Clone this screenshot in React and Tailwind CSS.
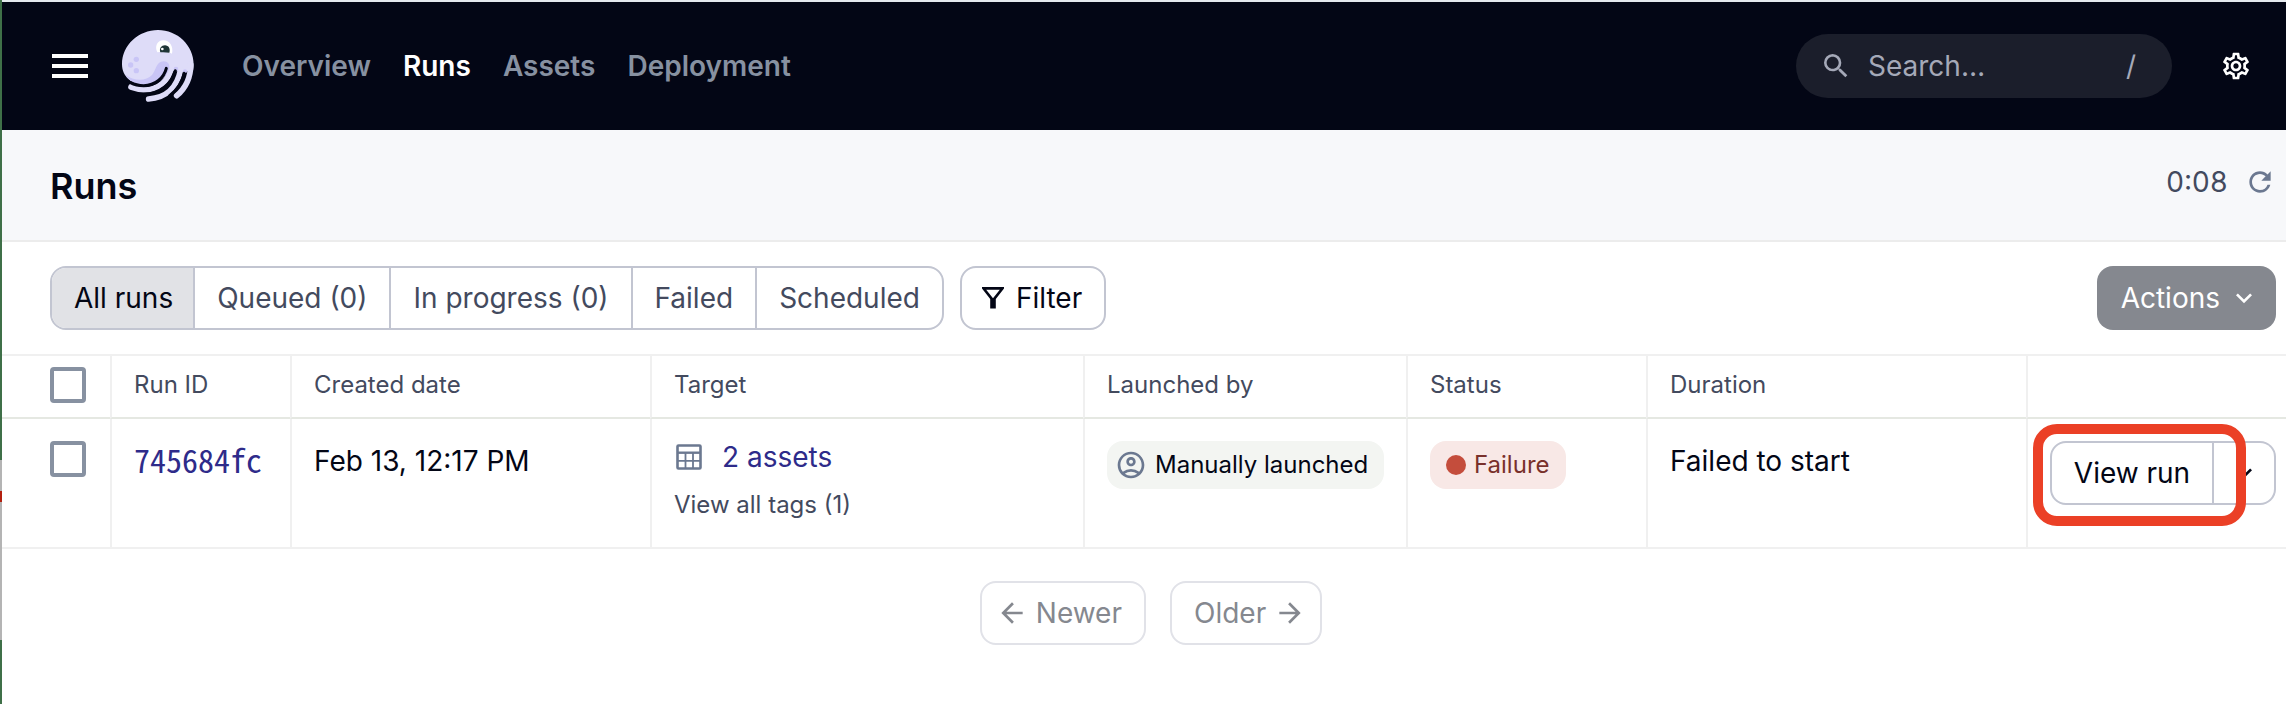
import { MdMenu, MdSearch, MdOutlineSettings, MdRefresh, MdOutlineAccountCircle, MdArrowBack, MdArrowForward, MdExpandMore } from "react-icons/md";

function Logo() {
  return (
    <svg viewBox="0 0 216 216" className="size-[72px]" fill="none" strokeLinecap="round" aria-hidden="true">
      <path
        d="M0 103C0 45 50 0 108 0s107 46 107 104c0 8-1 14-3 20l-77 0c-12 24-36 40-70 40C30 164 0 140 0 103Z"
        fill="#dedcf8"
      />
      <g stroke="#dedcf8" strokeWidth="17">
        <path d="M27 171c14 5 27 8 41 8 44 0 72-27 80-67" />
        <path d="M80 207c52-3 86-35 96-89" />
        <path d="M164 197c27-23 42-54 42-93" />
      </g>
      <path d="M10 134c26 20 62 20 80 1 12-13 12-41 35-41 13 0 18 10 17 20-6 30-40 51-77 51-24 0-44-12-55-31Z" fill="#c9c5f6" />
      <circle cx="162" cy="117" r="7" fill="#c9c5f6" />
      <circle cx="189" cy="124" r="6" fill="#c9c5f6" />
      <g stroke="#030615" strokeWidth="9">
        <path d="M133 115c-7 28-33 52-68 52-15 0-28-3-39-9" />
        <path d="M160 122c-11 40-46 69-94 71" />
        <path d="M187 130c-7 27-22 50-44 67" />
      </g>
      <circle cx="43" cy="88" r="8" fill="#c9c5f6" />
      <circle cx="26" cy="105" r="8" fill="#c9c5f6" />
      <circle cx="43" cy="122" r="8" fill="#c9c5f6" />
      <path d="M106 67c-9-17 0-36 18-36 19 0 31 18 26 40-12-6-31-7-44-4Z" fill="#fff" />
      <path d="M115 67c-4-11 3-21 14-21s17 11 13 22c-8-1-18-2-27-1Z" fill="#1f3536" />
      <circle cx="121" cy="57" r="4" fill="#fff" />
    </svg>
  );
}

function FilterIcon() {
  return (
    <svg viewBox="0 0 22 22" className="size-[22px]" aria-hidden="true">
      <path d="M0 0h22v1.500l-8.200 10.500v9.500h-5.600v-9.500L0 1.500ZM4.200 2.700l6.800 8.500 6.800-8.500Z" fill="currentColor" fillRule="evenodd" />
    </svg>
  );
}

function TableIcon() {
  return (
    <svg viewBox="0 0 26 26" className="size-[26px]" fill="none" stroke="currentColor" aria-hidden="true">
      <rect x="1.500" y="1.500" width="23" height="23" rx="1" strokeWidth="2.600" />
      <path d="M1 8.700h24" strokeWidth="2.400" />
      <path d="M1 16.800h24M9.500 9v16M17 9v16" strokeWidth="1.800" />
    </svg>
  );
}

const navItems = ["Overview", "Runs", "Assets", "Deployment"];
const tabs = ["All runs", "Queued (0)", "In progress (0)", "Failed", "Scheduled"];
const columns = ["Run ID", "Created date", "Target", "Launched by", "Status", "Duration"];

const checkbox = "block size-9 appearance-none rounded-[4px] border-4 border-[#8791a1] bg-white";
const outline = "flex h-16 items-center rounded-2xl border-2";
const th = "border-l-2 border-[#f0f0f0] px-[22px] pb-1 text-left text-2xl font-normal";
const td = "border-l-2 border-[#f0f0f0] px-[22px] pt-[22px] align-top";

export default function App() {
  return (
    <div className="flex min-h-screen bg-white font-[Inter,sans-serif] text-[28px] leading-10 text-[#030615]">
      <div className="flex w-[2px] shrink-0 flex-col bg-[#3f7048]">
        <div className="h-[460px]" />
        <div className="h-[180px] bg-[#b4b4b4] pt-[31px]">
          <div className="h-[11px] bg-[#b3200f]" />
        </div>
      </div>
      <div className="min-w-0 flex-1">
        <header className="flex h-[130px] items-center border-t-2 border-[#e4e9ee] bg-[#030615] pl-11 pr-[34px]">
          <button type="button" aria-label="Menu" className="text-white">
            <MdMenu className="size-12" />
          </button>
          <a href="#home" aria-label="Home" className="ml-7">
            <Logo />
          </a>
          <nav className="ml-12 flex gap-8 font-semibold">
            {navItems.map((item) => (
              <a key={item} href={"#" + item} className={item === "Runs" ? "text-white" : "text-[#8791a1]"}>
                {item}
              </a>
            ))}
          </nav>
          <label className="ml-auto flex h-16 w-[376px] items-center rounded-full bg-[#1b1e2b] pl-6 pr-9 text-[#a5a9b8]">
            <MdSearch className="size-8 shrink-0" />
            <input type="text" aria-label="Search" placeholder="Search…" className="ml-4 min-w-0 flex-1 bg-transparent placeholder:text-[#a5a9b8]" />
            <span>/</span>
          </label>
          <button type="button" aria-label="Settings" className="ml-12 text-white">
            <MdOutlineSettings className="size-8" />
          </button>
        </header>

        <div className="flex h-28 items-center justify-between border-b-2 border-[#ececec] bg-[#f7f8fa] pl-12 pr-[10px] pt-[2px]">
          <h1 className="text-4xl font-semibold">Runs</h1>
          <div className="flex items-center gap-4 pb-2 text-[#434a5e]">
            <span className="tabular-nums">0:08</span>
            <button type="button" aria-label="Refresh" className="text-[#6b7890]">
              <MdRefresh className="size-8" />
            </button>
          </div>
        </div>

        <div className="flex items-center gap-4 py-6 pl-12 pr-[10px]">
          <div className={outline + " overflow-hidden border-[#c2c5d1]"}>
            {tabs.map((tab, i) => (
              <button
                key={tab}
                type="button"
                className={
                  i === 0
                    ? "h-full bg-[#e1e2e6] pl-[22px] pr-5"
                    : "h-full border-l-2 border-[#c2c5d1] px-[22px] text-[#434a5e]"
                }
              >
                {tab}
              </button>
            ))}
          </div>
          <button type="button" className={outline + " gap-3 border-[#c2c5d1] pl-5 pr-[22px]"}>
            <FilterIcon />
            Filter
          </button>
          <button type="button" className="ml-auto flex h-16 items-center gap-2 rounded-2xl bg-[#85888f] pl-6 pr-4 text-white">
            Actions
            <MdExpandMore className="size-8" />
          </button>
        </div>

        <table className="w-full table-fixed border-separate border-spacing-0">
          <colgroup>
            <col className="w-[108px]" />
            <col className="w-[180px]" />
            <col className="w-[360px]" />
            <col className="w-[433px]" />
            <col className="w-[323px]" />
            <col className="w-[240px]" />
            <col className="w-[380px]" />
            <col />
          </colgroup>
          <thead className="text-[#434a5e]">
            <tr className="h-[65px] *:border-t-2 *:border-b-2 *:border-t-[#f0f0f0] *:border-b-[#e5e8e2]">
              <th className="pb-1 pl-12">
                <input type="checkbox" aria-label="Select all runs" className={checkbox} />
              </th>
              {columns.map((c) => (
                <th key={c} scope="col" className={th}>
                  {c}
                </th>
              ))}
              <th className={th} aria-label="Run actions" />
            </tr>
          </thead>
          <tbody>
            <tr className="h-[130px] *:border-b-2 *:border-b-[#f0f0f0]">
              <td className="pl-12 pt-[22px] align-top">
                <input type="checkbox" aria-label="Select run 745684fc" className={checkbox} />
              </td>
              <td className={td}>
                <a href="#run" className="block font-['Noto_Sans_Mono_CJK_SC','Liberation_Mono',monospace] text-[32px] leading-9 text-[#2e2b8a]">
                  745684fc
                </a>
              </td>
              <td className={td}>Feb 13, 12:17 PM</td>
              <td className={td}>
                <div className="-mt-1 flex items-center gap-5 pl-[2px] text-[#6b7890]">
                  <TableIcon />
                  <a href="#assets" className="text-[#2e2b8a]">
                    2 assets
                  </a>
                </div>
                <button type="button" className="mt-[10px] block text-2xl leading-9 text-[#434a5e]">
                  View all tags (1)
                </button>
              </td>
              <td className={td}>
                <span className="inline-flex h-12 items-center gap-2 whitespace-nowrap rounded-2xl bg-[#f3f5f2] pl-2 pr-4 text-2xl">
                  <MdOutlineAccountCircle className="size-8 shrink-0 text-[#6b7890]" />
                  Manually launched
                </span>
              </td>
              <td className={td}>
                <span className="inline-flex h-12 items-center gap-2 whitespace-nowrap rounded-2xl bg-[#f8e8e6] px-4 text-2xl text-[#79302b]">
                  <span className="size-5 rounded-full bg-[#c44d3c]" />
                  Failure
                </span>
              </td>
              <td className={td}>Failed to start</td>
              <td className={td + " pr-[10px]"}>
                <div className="relative flex">
                  <button type="button" className="h-16 flex-1 whitespace-nowrap rounded-l-2xl border-2 border-[#c2c5d1]">
                    View run
                  </button>
                  <button type="button" aria-label="More run actions" className="flex h-16 w-[62px] items-center justify-center rounded-r-2xl border-2 border-l-0 border-[#c2c5d1]">
                    <MdExpandMore className="size-8" />
                  </button>
                  <div className="pointer-events-none absolute -top-[17px] -left-[17px] h-[102px] w-[213px] rounded-3xl border-10 border-[#eb4026]" />
                </div>
              </td>
            </tr>
          </tbody>
        </table>

        <div className="flex justify-center gap-6 pt-8 pl-[14px] text-[#85888f]">
          <button type="button" className={outline + " gap-2 border-[#e1e2e8] pl-[14px] pr-[22px]"}>
            <MdArrowBack className="size-8" />
            Newer
          </button>
          <button type="button" className={outline + " gap-2 border-[#e1e2e8] pl-[22px] pr-[14px]"}>
            Older
            <MdArrowForward className="size-8" />
          </button>
        </div>
      </div>
    </div>
  );
}
